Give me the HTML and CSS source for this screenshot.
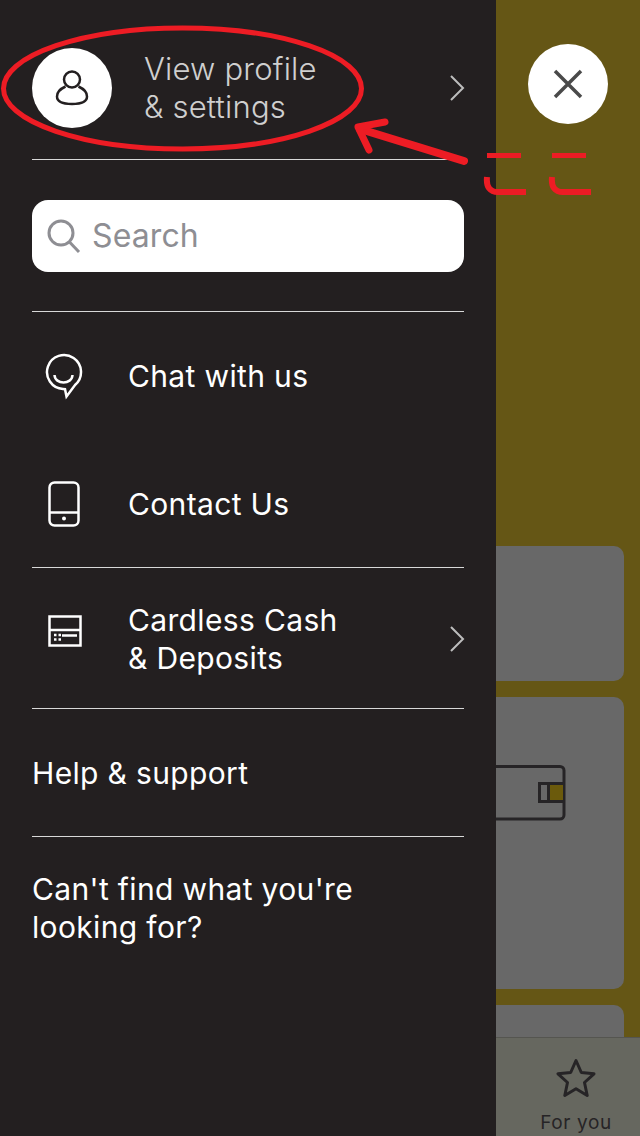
FILE: index.html
```html
<!DOCTYPE html>
<html lang="en">
<head>
    <title>Menu</title>
    <link rel="stylesheet" href="styles.css">
</head>

<body>
    <div class="page">
        <div class="cards">
            <div class="card card_small"></div>
            <div class="card card_big">
                <svg class="wallet" width="200" height="56" viewBox="0 0 200 56" fill="none" stroke="#262426" stroke-width="3">
                    <path d="M0 1.5H194a4 4 0 0 1 4 4V50a4 4 0 0 1-4 4H0"/>
                    <rect x="184" y="20" width="13" height="15" fill="#6b5a0c" stroke="none"/>
                    <path d="M198 18.500H173.500V36.500H198"/>
                    <path d="M182.500 18V37"/>
                </svg>
            </div>
            <div class="card card_last"></div>
        </div>
        <div class="tabbar">
            <div class="tab">
                <svg width="40" height="40" viewBox="0 0 40 40" fill="none" stroke="#262426" stroke-width="3" stroke-linejoin="round">
                    <path d="M20 2.500L25.300 14.500L38 15.800L28.500 24.500L31.200 37.500L20 30.800L8.800 37.500L11.500 24.500L2 15.800L14.700 14.500Z"/>
                </svg>
                <span>For you</span>
            </div>
        </div>
    </div>

    <div class="drawer">
        <div class="profile">
            <div class="avatar">
                <svg width="40" height="40" viewBox="0 0 40 40" fill="none" stroke="#231f20" stroke-width="2.500">
                    <circle cx="20" cy="11.500" r="8"/>
                    <path d="M13.500 18.500C8 21 5 24.500 5 28.500C5 34 11 36 20 36C29 36 35 34 35 28.500C35 24.500 32 21 26.500 18.500"/>
                </svg>
            </div>
            <div class="profile_text">View profile<br>&amp; settings</div>
            <svg class="chevron" width="16" height="28" viewBox="0 0 16 28" fill="none" stroke="#bdbdbd" stroke-width="2">
                <path d="M2 2L14 14L2 26"/>
            </svg>
        </div>

        <div class="search_wrap">
            <div class="search">
                <svg width="36" height="36" viewBox="0 0 36 36" fill="none" stroke="#8e8e93" stroke-width="3">
                    <circle cx="15" cy="15" r="12"/>
                    <path d="M23.500 24L33 34"/>
                </svg>
                <span>Search</span>
            </div>
        </div>

        <div class="group group_contact">
            <div class="row">
                <div class="row_icon">
                    <svg width="40" height="48" viewBox="0 0 40 48" fill="none" stroke="#fff" stroke-width="2.500">
                        <path d="M31 33A17 17 0 1 0 19 37L21 37.200L22.500 44.500Z"/>
                        <path d="M10.500 23C11 33 28 33 28.500 23"/>
                    </svg>
                </div>
                <span>Chat with us</span>
            </div>
            <div class="row">
                <div class="row_icon row_icon_phone">
                    <svg width="32" height="46" viewBox="0 0 32 46" fill="none" stroke="#fff" stroke-width="2.500">
                        <rect x="1.500" y="1.500" width="29" height="43" rx="5"/>
                        <path d="M1.500 31.500H30.500"/>
                        <circle cx="16" cy="37.500" r="2" fill="#fff" stroke="none"/>
                    </svg>
                </div>
                <span>Contact Us</span>
            </div>
        </div>

        <div class="row row_cash">
            <div class="row_icon">
                <svg width="34" height="32" viewBox="0 0 34 32" fill="none" stroke="#fff" stroke-width="2.500">
                    <rect x="1.500" y="1.500" width="31" height="29"/>
                    <path d="M1.500 15H32.500"/>
                    <path d="M14 20.500H29"/>
                    <path d="M6 20H8.500M10.500 20H13M6 24.500H8.500M10.500 24.500H13"/>
                </svg>
            </div>
            <span class="row_two">Cardless Cash<br>&amp; Deposits</span>
            <svg class="chevron" width="16" height="28" viewBox="0 0 16 28" fill="none" stroke="#bdbdbd" stroke-width="2">
                <path d="M2 2L14 14L2 26"/>
            </svg>
        </div>

        <div class="plain plain_help">Help &amp; support</div>
        <div class="plain plain_last">Can't find what you're<br>looking for?</div>
    </div>

    <div class="close">
        <svg width="32" height="32" viewBox="0 0 32 32" stroke="#4a4a4a" stroke-width="3.500">
            <path d="M3 3L29 29M29 3L3 29"/>
        </svg>
    </div>

    <svg class="marks" width="640" height="260" viewBox="0 0 640 260" fill="none" stroke="#ed1c24" stroke-linecap="round">
        <ellipse cx="182.500" cy="88.500" rx="179" ry="60.500" stroke-width="5"/>
        <path d="M464 161L360 129" stroke-width="8"/>
        <path d="M385 122L358 127L369 150" stroke-width="7" stroke-linejoin="round"/>
        <path d="M487 155.500H521M552 155.500H586" stroke-width="5" stroke-linecap="butt"/>
        <path d="M487 177C486 187 490 192 498 192H526M552 177C551 187 555 192 563 192H591" stroke-width="6" stroke-linecap="butt"/>
    </svg>
</body>

</html>
```

FILE: styles.css
```css
* {
    box-sizing: border-box;
}

html, body {
    margin: 0;
    height: 1136px;
    overflow: hidden;
}

body {
    position: relative;
    width: 640px;
    font-family: Inter, "Liberation Sans", sans-serif;
    background-color: #655615;
}

.page {
    width: 640px;
    height: 1136px;
    display: flex;
    flex-direction: column;
}

.cards {
    height: 1037px;
    overflow: hidden;
    padding: 546px 16px 0 16px;
    display: flex;
    flex-direction: column;
    gap: 16px;
    flex: none;
}

.card {
    background-color: #686868;
    border-radius: 10px;
    flex: none;
}

.card_small {
    height: 135px;
}

.card_big {
    height: 292px;
    padding: 68px 58px 0 0;
    display: flex;
    justify-content: flex-end;
    align-items: flex-start;
}

.card_last {
    height: 60px;
}

.tabbar {
    flex: 1;
    background-color: #66675f;
    border-top: 1px solid #555550;
    display: flex;
    justify-content: flex-end;
}

.tab {
    width: 128px;
    padding-top: 20px;
    display: flex;
    flex-direction: column;
    align-items: center;
    color: #262426;
    font-size: 19px;
    letter-spacing: 0.6px;
}

.tab span {
    margin-top: 13px;
}

.drawer {
    position: absolute;
    top: 0;
    left: 0;
    width: 496px;
    height: 1136px;
    background-color: #231f20;
    color: #fff;
    font-size: 30px;
    line-height: 38px;
    letter-spacing: 0.35px;
    padding: 0 32px;
}

.profile {
    height: 160px;
    padding: 48px 0 31px 0;
    border-bottom: 1px solid #d8d8d8;
    display: flex;
    align-items: center;
}

.avatar {
    width: 80px;
    height: 80px;
    border-radius: 50%;
    background-color: #fff;
    display: flex;
    align-items: center;
    justify-content: center;
    flex: none;
}

.profile_text {
    margin-left: 32px;
    color: #cfcfcf;
    font-size: 31px;
    font-weight: 300;
    letter-spacing: 0.2px;
    flex: 1;
}

.chevron {
    margin-right: -1px;
    flex: none;
}

.search_wrap {
    height: 152px;
    padding-top: 40px;
    border-bottom: 1px solid #d8d8d8;
}

.search {
    height: 72px;
    background-color: #fff;
    border-radius: 16px;
    padding-left: 14px;
    display: flex;
    align-items: center;
    gap: 10px;
    color: #8e8e93;
    font-size: 32px;
    letter-spacing: 0.1px;
}

.group_contact {
    height: 256px;
    border-bottom: 1px solid #d8d8d8;
}

.row {
    height: 128px;
    display: flex;
    align-items: center;
}

.group_contact .row:last-child {
    height: 127px;
}

.row_icon {
    width: 96px;
    padding-left: 12px;
    display: flex;
    align-items: center;
    flex: none;
}

.row_icon_phone {
    padding-left: 16px;
}

.row_cash {
    height: 141px;
    border-bottom: 1px solid #d8d8d8;
    padding-top: 1px;
}

.row_cash .row_icon {
    padding-left: 16px;
    margin-top: -16px;
}

.row_two {
    flex: 1;
}

.plain_help {
    height: 128px;
    padding-top: 45px;
    border-bottom: 1px solid #d8d8d8;
}

.plain_last {
    padding-top: 33px;
}

.close {
    position: absolute;
    top: 44px;
    left: 528px;
    width: 80px;
    height: 80px;
    border-radius: 50%;
    background-color: #fff;
    display: flex;
    align-items: center;
    justify-content: center;
}

.marks {
    position: absolute;
    top: 0;
    left: 0;
}
```
